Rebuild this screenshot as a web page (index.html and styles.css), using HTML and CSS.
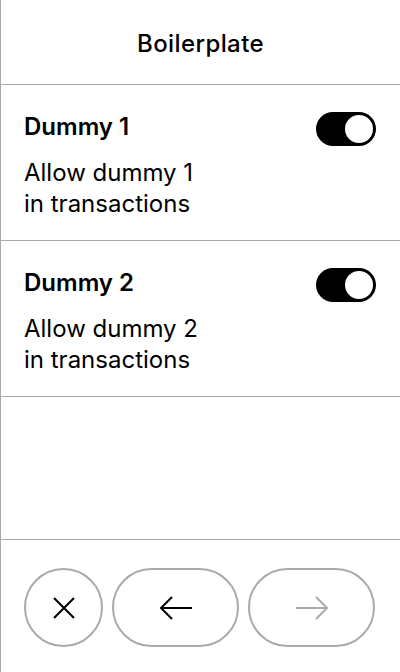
FILE: index.html
```html
<!DOCTYPE html>
<html>
<head>
<meta charset="utf-8">
<link rel="stylesheet" href="styles.css">
</head>
<body>
<div class="screen">
  <header class="header">Boilerplate</header>
  <section class="item">
    <div class="item-text">
      <div class="item-title">Dummy 1</div>
      <div class="item-desc">Allow dummy 1<br>in transactions</div>
    </div>
    <div class="toggle"><div class="knob"></div></div>
  </section>
  <section class="item">
    <div class="item-text">
      <div class="item-title">Dummy 2</div>
      <div class="item-desc">Allow dummy 2<br>in transactions</div>
    </div>
    <div class="toggle"><div class="knob"></div></div>
  </section>
  <div class="spacer"></div>
  <footer class="footer">
    <button class="btn btn-round" aria-label="cancel">
      <svg width="24" height="24" viewBox="0 0 24 24"><path d="M2 2L22 22M22 2L2 22" stroke="#000" stroke-width="2" fill="none"/></svg>
    </button>
    <button class="btn btn-pill" aria-label="back">
      <svg width="34" height="26" viewBox="0 0 34 26"><path d="M33 13H2M13 2L2 13L13 24" stroke="#000" stroke-width="2" fill="none"/></svg>
    </button>
    <button class="btn btn-pill" aria-label="next">
      <svg width="34" height="26" viewBox="0 0 34 26"><path d="M1 13H32M21 2L32 13L21 24" stroke="#aaa" stroke-width="2" fill="none"/></svg>
    </button>
  </footer>
</div>
</body>
</html>
```
FILE: styles.css
```css
* { box-sizing: border-box; }
html, body { margin: 0; padding: 0; background: #fff; }
body { font-family: Inter, "Noto Sans", sans-serif; color: #000; }
.screen {
  width: 400px;
  height: 672px;
  border-left: 1px solid #aaa;
  display: flex;
  flex-direction: column;
}
.header {
  height: 85px;
  border-bottom: 1px solid #aaa;
  display: flex;
  align-items: center;
  justify-content: center;
  font-size: 24px;
  font-weight: 500;
  letter-spacing: 0.4px;
  line-height: 29px;
  padding-top: 2px;
}
.item {
  height: 156px;
  border-bottom: 1px solid #aaa;
  display: flex;
  justify-content: space-between;
  padding: 27px 24px 0 23px;
}
.item-title {
  font-size: 24px;
  font-weight: 600;
  line-height: 30px;
}
.item-desc {
  font-size: 24px;
  font-weight: 400;
  line-height: 31px;
  margin-top: 15px;
}
.toggle {
  width: 60px;
  height: 34px;
  border-radius: 17px;
  background: #000;
  display: flex;
  justify-content: flex-end;
  align-items: center;
  padding: 1px;
}
.knob {
  width: 32px;
  height: 32px;
  border-radius: 50%;
  background: #fff;
  border: 2px solid #000;
}
.spacer { flex: 1; border-bottom: 1px solid #aaa; }
.footer {
  height: 132px;
  display: flex;
  gap: 9px;
  padding: 28px 24px 0 23px;
}
.btn {
  height: 79px;
  background: #fff;
  border: 2px solid #aaa;
  border-radius: 40px;
  display: flex;
  align-items: center;
  justify-content: center;
  padding: 0;
}
.btn-round { width: 79px; }
.btn-pill { width: 127px; }
```
